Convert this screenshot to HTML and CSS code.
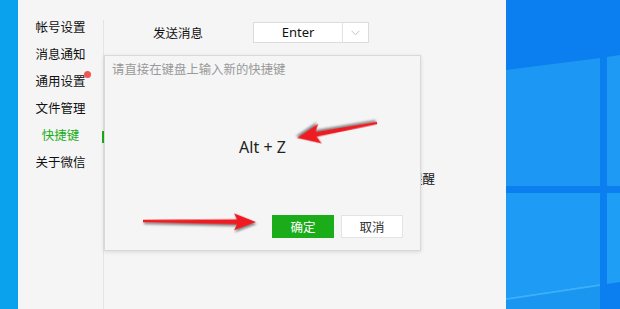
FILE: index.html
```html
<!DOCTYPE html>
<html lang="zh">
<head>
<meta charset="utf-8">
<link rel="stylesheet" href="styles.css">
</head>
<body>
<div class="strip"></div>
<div class="panel">
  <nav class="sidebar">
    <div class="item">帐号设置</div>
    <div class="item">消息通知</div>
    <div class="item badge">通用设置</div>
    <div class="item">文件管理</div>
    <div class="item active">快捷键</div>
    <div class="item">关于微信</div>
  </nav>
  <main class="main">
    <div class="row">
      <span class="label">发送消息</span>
      <div class="select">
        <span class="value">Enter</span>
        <span class="caret"><svg width="9" height="6" viewBox="0 0 9 6"><polyline points="0.5,0.8 4.5,4.8 8.5,0.8" fill="none" stroke="#c4c4c4" stroke-width="1"/></svg></span>
      </div>
    </div>
    <div class="row2">提醒</div>
  </main>
  <div class="dialog">
    <div class="hint">请直接在键盘上输入新的快捷键</div>
    <div class="keys">Alt + Z</div>
    <div class="actions">
      <button class="btn ok">确定</button>
      <button class="btn cancel">取消</button>
    </div>
  </div>
</div>
<div class="desktop">
  <svg width="114" height="309" viewBox="0 0 114 309">
    <rect x="0" y="0" width="114" height="309" fill="#0b7fef"/>
    <polygon points="0,70 94,58 94,186 0,186" fill="#1c97f3"/>
    <polygon points="101,57 114,55 114,186 101,186" fill="#1e99f4"/>
    <polygon points="0,193 94,193 94,284 0,298" fill="#1e9cf5"/>
    <polygon points="101,193 114,193 114,282 101,284" fill="#1f9ef5"/>
    <polygon points="0,298 94,284 94,309 0,309" fill="#1a95f0"/>
    <polygon points="0,298 94,284 94,286 0,300" fill="#3bb0f8"/>
  </svg>
</div>
<svg class="arrows" width="620" height="309" viewBox="0 0 620 309">
  <g class="arrow" transform="translate(377,123) rotate(169.4)">
    <polygon points="0,-1.2 62,-2.6 58,-10 81.4,0 58,10 62,2.6 0,1.2"/>
  </g>
  <g class="arrow" transform="translate(143,221) rotate(0.5)">
    <polygon points="0,-1.2 94,-2.6 91,-8.5 113,0 91,8.5 94,2.6 0,1.2"/>
  </g>
</svg>
</body>
</html>
```
FILE: styles.css
```css
* { box-sizing: border-box; }
html, body { margin: 0; padding: 0; }
body {
  width: 620px;
  height: 309px;
  overflow: hidden;
  display: flex;
  position: relative;
  font-family: "Noto Sans", "Noto Sans CJK SC", sans-serif;
  color: #333;
}
.strip { width: 18px; background: #0aa1ed; flex: none; }
.panel {
  width: 488px;
  flex: none;
  background: #f5f5f5;
  display: flex;
  position: relative;
}
.sidebar {
  width: 85px;
  flex: none;
  padding-top: 14px;
  display: flex;
  flex-direction: column;
}
.item {
  height: 27px;
  line-height: 27px;
  font-size: 12.5px;
  text-align: center;
  color: #111;
  position: relative;
}
.item.active { color: #1aad19; }
.item.badge::after {
  content: "";
  position: absolute;
  left: 66px;
  top: 3px;
  width: 7px;
  height: 7px;
  border-radius: 50%;
  background: #f25555;
}
.main {
  flex: 1;
  margin-top: 20px;
  border-left: 1px solid #e4e4e4;
  position: relative;
}
.main::before {
  content: "";
  position: absolute;
  left: -2px;
  top: 111px;
  width: 2px;
  height: 12px;
  background: #1aad19;
}
.row {
  margin-top: 2px;
  padding-left: 49px;
  display: flex;
  align-items: center;
  height: 21px;
}
.label { width: 50px; font-size: 12.5px; color: #111; }
.select {
  margin-left: 50px;
  width: 116px;
  height: 21px;
  background: #fff;
  border: 1px solid #dcdcdc;
  display: flex;
}
.value {
  width: 89px;
  text-align: center;
  font-size: 13px;
  line-height: 19px;
  color: #111;
  border-right: 1px solid #e2e2e2;
}
.caret { flex: 1; display: flex; align-items: center; justify-content: center; }
.row2 {
  margin-top: 129px;
  padding-left: 306px;
  font-size: 12.5px;
  line-height: 16px;
  color: #111;
}
.dialog {
  position: absolute;
  left: 86px;
  top: 55px;
  width: 317px;
  height: 196px;
  background: #f5f5f5;
  border: 1px solid #d9d9d9;
  box-shadow: 0 1px 4px rgba(0,0,0,0.12);
  display: flex;
  flex-direction: column;
}
.hint {
  padding: 6px 0 0 7px;
  font-size: 12.4px;
  line-height: 16px;
  color: #999;
}
.keys {
  flex: 1;
  display: flex;
  align-items: center;
  justify-content: center;
  font-size: 16px;
  color: #222;
}
.actions {
  display: flex;
  justify-content: flex-end;
  gap: 7px;
  padding: 0 17px 12px 0;
}
.btn {
  width: 62px;
  height: 23px;
  font-family: inherit;
  font-size: 12.5px;
  padding: 0;
  border-radius: 0;
}
.ok { background: #1aad19; color: #fff; border: 1px solid #1aad19; }
.cancel { background: #fff; color: #333; border: 1px solid #e3e3e3; }
.desktop { flex: 1; background: #0b7fef; }
.desktop svg { display: block; }
.arrows { position: absolute; left: 0; top: 0; pointer-events: none; }
.arrow { fill: #ee1c22; filter: drop-shadow(1px 2px 1.2px rgba(0,0,0,0.45)); }
```
